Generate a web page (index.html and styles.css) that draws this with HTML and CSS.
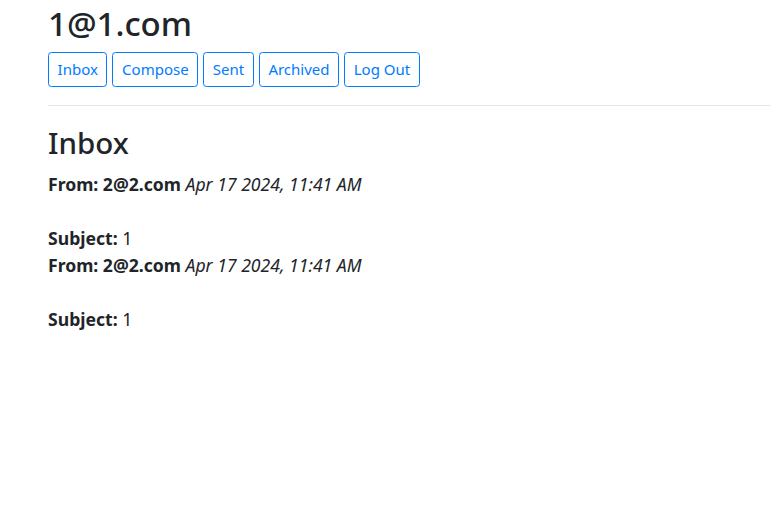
FILE: index.html
```html
<!DOCTYPE html>
<html lang="en">
<head>
<meta charset="utf-8">
<title>Mail</title>
<link rel="stylesheet" href="styles.css">
</head>
<body>
<div class="page">
  <h2 class="user">1@1.com</h2>
  <nav class="nav">
    <button class="btn">Inbox</button>
    <button class="btn">Compose</button>
    <button class="btn">Sent</button>
    <button class="btn">Archived</button>
    <a class="btn" href="#">Log Out</a>
  </nav>
  <hr class="rule">
  <h3 class="title">Inbox</h3>
  <div class="mail">
    <div class="line"><b>From: 2@2.com</b> <i>Apr 17 2024, 11:41 AM</i></div>
    <div class="line"><br></div>
    <div class="line"><b>Subject:</b> 1</div>
  </div>
  <div class="mail">
    <div class="line"><b>From: 2@2.com</b> <i>Apr 17 2024, 11:41 AM</i></div>
    <div class="line"><br></div>
    <div class="line"><b>Subject:</b> 1</div>
  </div>
</div>
</body>
</html>
```
FILE: styles.css
```css
html, body {
  margin: 0;
  padding: 0;
  background: #fff;
}
body {
  font-family: "Noto Sans", "Open Sans", sans-serif;
  font-size: 17.6px;
  line-height: 27px;
  color: #212529;
}
.page {
  padding-left: 48px;
}
.user {
  margin: 0 0 7px;
  padding-top: 2px;
  font-size: 33px;
  font-weight: 500;
  line-height: 43.2px;
}
.title {
  margin: 0 0 9px;
  font-size: 29.5px;
  font-weight: 500;
  line-height: 37.8px;
}
.nav {
  display: flex;
  gap: 5px;
}
.btn {
  display: inline-block;
  font-family: inherit;
  font-size: 15px;
  line-height: 23px;
  padding: 5px 8.6px;
  border: 1px solid #007bff;
  border-radius: 3.5px;
  background: transparent;
  color: #007bff;
  text-decoration: none;
  cursor: pointer;
}
.rule {
  margin: 18px 0;
  border: 0;
  border-top: 1px solid rgba(0,0,0,.1);
}
.line b {
  font-weight: 700;
}
.line i {
  font-style: italic;
}
```
